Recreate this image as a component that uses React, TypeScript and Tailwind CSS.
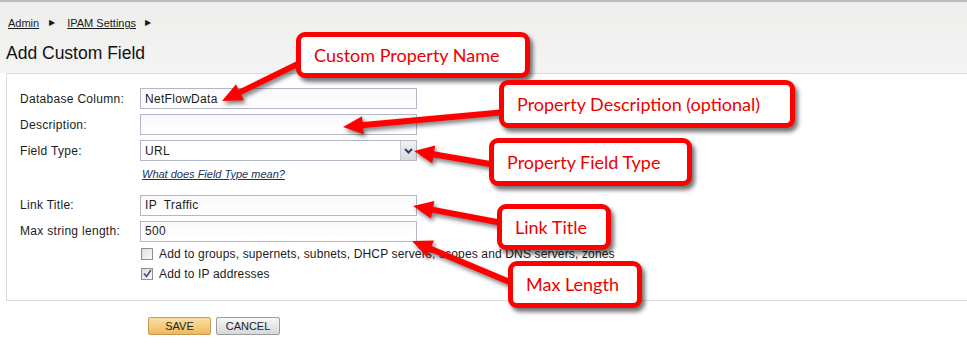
import React from "react";

type Pt = [number, number];

function Arrow({ from, to }: { from: Pt; to: Pt }) {
  const dx = to[0] - from[0];
  const dy = to[1] - from[1];
  const len = Math.hypot(dx, dy);
  const ux = dx / len;
  const uy = dy / len;
  const head = 20;
  const half = 9;
  const bx = to[0] - ux * head;
  const by = to[1] - uy * head;
  const px = -uy;
  const py = ux;
  const pts = [
    `${to[0]},${to[1]}`,
    `${bx + px * half},${by + py * half}`,
    `${bx - px * half},${by - py * half}`,
  ].join(" ");
  return (
    <g>
      <line x1={from[0]} y1={from[1]} x2={bx + ux * 2} y2={by + uy * 2} stroke="#ff0000" strokeWidth={6} />
      <polygon points={pts} fill="#ff0000" />
    </g>
  );
}

function Callout({ className, children }: { className: string; children: React.ReactNode }) {
  return (
    <div
      className={`absolute flex items-center rounded-[9px] border-[5px] border-[#ff0000] bg-white pl-[13px] text-[18px] text-[#ee0000] font-['Lato',sans-serif] shadow-[3px_4px_4px_rgba(0,0,0,0.55)] ${className}`}
    >
      {children}
    </div>
  );
}

function TextInput({ value }: { value?: string }) {
  return (
    <div className="flex h-[21px] w-[277px] items-center whitespace-pre border border-[#b3b7c6] bg-gradient-to-b from-[#f9f9fb] to-white pl-[4px] text-[12px] tracking-[0.3px] text-[#1c1c1c]">
      {value}
    </div>
  );
}

function Checkbox({ checked }: { checked?: boolean }) {
  return (
    <div className="flex h-[12px] w-[12px] items-center justify-center border border-[#8f8f8f] bg-gradient-to-br from-[#dcdcdc] to-[#fafafa]">
      {checked && (
        <svg width="9" height="9" viewBox="0 0 9 9">
          <path d="M1 4.5 L3.5 7.5 L8 1" fill="none" stroke="#3b4f8a" strokeWidth="1.6" />
        </svg>
      )}
    </div>
  );
}

function Row({ label, children }: { label: string; children: React.ReactNode }) {
  return (
    <div className="flex items-center">
      <div className="w-[120px] text-[12px] tracking-[0.3px] text-[#1c1c1c]">{label}</div>
      {children}
    </div>
  );
}

export default function App() {
  return (
    <div className="relative h-[353px] w-[967px] overflow-hidden bg-white font-['Liberation_Sans',Arial,sans-serif]">
      {/* header */}
      <div className="h-[73px] border-t-2 border-[#bdbdbd] bg-gradient-to-b from-[#eeeeec] to-[#f4f4f4]">
        <div className="flex items-center pl-[8px] pt-[13px] text-[11px] text-[#1a1a1a]">
          <span className="underline">Admin</span>
          <span className="ml-[10px] text-[8px]">▶</span>
          <span className="ml-[12px] underline">IPAM Settings</span>
          <span className="ml-[9px] text-[8px]">▶</span>
        </div>
        <div className="pl-[6px] pt-[11px] text-[17.5px] leading-[20px] text-[#111]">Add Custom Field</div>
      </div>

      {/* panel */}
      <div className="ml-[6px] h-[228px] border-t border-l border-b border-[#dadada] bg-white pl-[13px] pt-[14px]">
        <div className="flex flex-col gap-[5px]">
          <Row label="Database Column:">
            <TextInput value="NetFlowData" />
          </Row>
          <Row label="Description:">
            <TextInput />
          </Row>
          <Row label="Field Type:">
            <div className="flex h-[21px] w-[277px] items-center border border-[#b3b7c6] bg-white text-[12px] tracking-[0.3px] text-[#1c1c1c]">
              <span className="flex-1 pl-[4px]">URL</span>
              <div className="flex h-full w-[16px] items-center justify-center border-l border-[#c9ccd6] bg-gradient-to-b from-[#f2f2f2] to-[#d9dadd]">
                <svg width="9" height="6" viewBox="0 0 9 6">
                  <path d="M1 1 L4.5 4.5 L8 1" fill="none" stroke="#2d3f78" strokeWidth="2" />
                </svg>
              </div>
            </div>
          </Row>
        </div>
        <div className="ml-[122px] mt-[5px] text-[11px] italic text-[#1d2f5f] underline">What does Field Type mean?</div>
        <div className="mt-[12px] flex flex-col gap-[5px]">
          <Row label="Link Title:">
            <TextInput value="IP  Traffic" />
          </Row>
          <Row label="Max string length:">
            <TextInput value="500" />
          </Row>
        </div>
        <div className="ml-[121px] mt-[3px] flex flex-col gap-[2px] text-[12px] tracking-[0.15px] text-[#1c1c1c]">
          <div className="flex items-center gap-[6px]">
            <Checkbox />
            <span>Add to groups, supernets, subnets, DHCP servers, scopes and DNS servers, zones</span>
          </div>
          <div className="flex items-center gap-[6px]">
            <Checkbox checked />
            <span>Add to IP addresses</span>
          </div>
        </div>
      </div>

      {/* buttons */}
      <div className="ml-[148px] mt-[16px] flex gap-[5px] text-[11px] text-[#222]">
        <button className="h-[18px] w-[63px] rounded-[2px] border border-[#c49a55] bg-gradient-to-b from-[#fbe0a6] to-[#efb95a] leading-[16px]">
          SAVE
        </button>
        <button className="h-[18px] w-[64px] rounded-[2px] border border-[#9d9d9d] bg-gradient-to-b from-[#f7f7f7] to-[#d6d8da] leading-[16px]">
          CANCEL
        </button>
      </div>

      {/* annotation arrows */}
      <svg className="pointer-events-none absolute left-0 top-0" width="967" height="353" style={{ filter: "drop-shadow(2px 3px 2px rgba(0,0,0,0.5))" }}>
        <Arrow from={[306, 60]} to={[222, 101]} />
        <Arrow from={[506, 112]} to={[343, 127]} />
        <Arrow from={[496, 165]} to={[414, 151]} />
        <Arrow from={[502, 223]} to={[413, 206]} />
        <Arrow from={[512, 283]} to={[412, 241]} />
      </svg>

      <Callout className="left-[296px] top-[32px] h-[46px] w-[234px]">Custom Property Name</Callout>
      <Callout className="left-[499px] top-[80px] h-[48px] w-[296px]">Property Description (optional)</Callout>
      <Callout className="left-[489px] top-[138px] h-[48px] w-[203px]">Property Field Type</Callout>
      <Callout className="left-[497px] top-[204px] h-[46px] w-[114px]">Link Title</Callout>
      <Callout className="left-[508px] top-[261px] h-[47px] w-[134px]">Max Length</Callout>
    </div>
  );
}
